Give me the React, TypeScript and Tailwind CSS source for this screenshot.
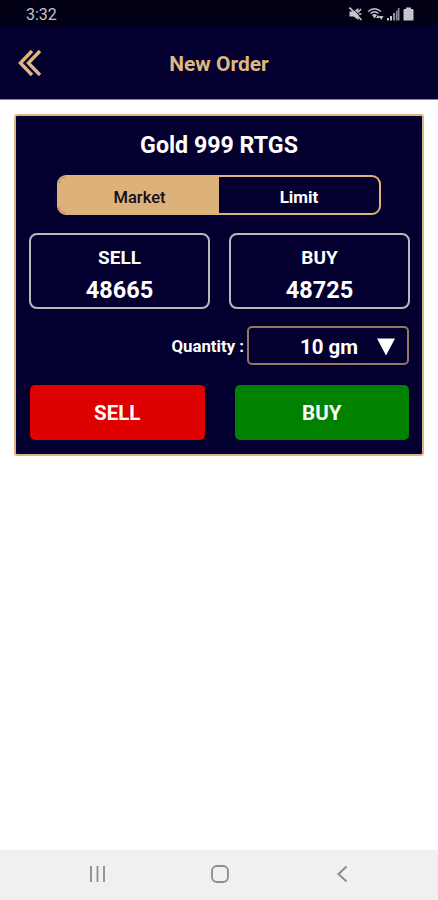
import React, { useState } from "react";

type PriceBoxProps = {
  label: string;
  price: number;
};

function StatusBar() {
  return (
    <div className="flex h-[26px] items-center justify-between bg-[#020014] pl-[26px] pr-[24px] text-[#c4c4ca]">
      <span className="pt-[3px] text-base leading-none">3:32</span>
      <div className="flex items-center pt-px">
        <svg width="14" height="14" viewBox="0 0 14 14" fill="currentColor">
          <path d="M.5 4.500H4L9.500 1v12L4.500 9.500h-4z" />
          <path d="M9.500 5l2.500-3M10 7h2.500" stroke="currentColor" strokeWidth="1.400" />
          <path d="M3 .5l9.500 10" stroke="#020014" strokeWidth="1" />
          <path d="M.5 .5l12 12.500" stroke="currentColor" strokeWidth="1.700" />
        </svg>
        <svg className="ml-[4px]" width="17" height="14" viewBox="0 0 17 14" fill="none" stroke="currentColor">
          <path d="M1 4.500Q7.500-1 14 4.500" strokeWidth="1.300" />
          <path d="M3.500 6.500Q7.500 3 11.500 6.500" strokeWidth="1.500" />
          <path d="M5 8q2.500-2 5 0l-2.500 3.500z" fill="currentColor" stroke="none" />
          <path d="M9 11l2-3 2 3zM12 9l2.200 4L16.500 9z" fill="currentColor" stroke="none" />
        </svg>
        <svg className="ml-[3px]" width="13" height="14" viewBox="0 0 13 14" fill="currentColor">
          <path d="M0 11h2v2.500H0zM3 9h2v4.500H3z" />
          <path d="M6 6h2.200v7.500H6zM9 3.500h1.500v10H9zM10.800 1h1.700v12.500h-1.700z" opacity=".7" />
        </svg>
        <svg className="ml-[3px]" width="11" height="14" viewBox="0 0 11 14" fill="currentColor">
          <path d="M3 .5h5V2h1.500q1 0 1 1v10q0 .5-.5.500H1q-.5 0-.5-.5V3q0-1 1-1H3z" />
        </svg>
      </div>
    </div>
  );
}

function Header() {
  return (
    <header className="grid h-[74px] grid-cols-[1fr_auto_1fr] items-center border-b border-[#8b8791] bg-[#030030] text-[#dfb780]">
      <button type="button" aria-label="Back" className="ml-[18px] w-6 pt-px">
        <svg width="24" height="28" viewBox="0 0 24 28" fill="none" stroke="currentColor" strokeWidth="3.300">
          <path d="M14 2L2.400 14 14 26M22 2L10.400 14 22 26" />
        </svg>
      </button>
      <h1 className="pt-[3px] text-[21px] font-bold leading-6">New Order</h1>
    </header>
  );
}

function PriceBox({ label, price }: PriceBoxProps) {
  return (
    <div className="flex h-[76px] flex-col items-center rounded-lg border-2 border-[#b9b9ba] pt-[11px]">
      <span className="text-[19px] font-bold leading-6">{label}</span>
      <span className="mt-1 text-[23.500px] font-bold leading-8">{price}</span>
    </div>
  );
}

function OrderCard() {
  const [orderType, setOrderType] = useState("Market");
  return (
    <section className="mx-[14px] mt-[14px] h-[342px] rounded-[3px] border-2 border-[#ddb580] bg-[#030030] px-[13px] text-white">
      <h2 className="pt-[13px] text-center text-[23.200px] font-bold leading-8">
        Gold 999 RTGS
      </h2>
      <div className="mx-auto mt-[14px] grid h-10 w-[324px] grid-cols-2 overflow-hidden rounded-[9px] border-2 border-[#ddb27a]">
        {["Market", "Limit"].map((type) => (
          <button
            key={type}
            type="button"
            onClick={() => setOrderType(type)}
            className={
              orderType === type
                ? "bg-[#ddb27a] pl-px pt-[6px] text-[16.500px] font-medium text-[#120d18]"
                : "pt-[5px] text-[17px] font-bold text-white"
            }
          >
            {type}
          </button>
        ))}
      </div>
      <div className="-mr-px mt-[18px] grid grid-cols-2 gap-[19px]">
        <PriceBox label="SELL" price={48665} />
        <PriceBox label="BUY" price={48725} />
      </div>
      <div className="mt-[17px] flex items-center justify-end gap-[3px]">
        <span className="pt-[3px] text-[16.800px] font-bold">Quantity :</span>
        <button
          type="button"
          className="flex h-[39px] w-[162px] items-center justify-end rounded-[5px] border-2 border-[#94775f] pr-[12px]"
        >
          <span className="pt-[3px] text-[20.500px] font-bold">10 gm</span>
          <svg className="ml-[19px] mt-[2px]" width="18" height="18" viewBox="0 0 18 18" fill="currentColor">
            <path d="M0 .5h18L9 17.500z" />
          </svg>
        </button>
      </div>
      <div className="ml-px mt-5 grid grid-cols-2 gap-[30px] text-[20.500px] font-bold">
        <button type="button" className="h-[55px] rounded-[5px] bg-[#df0000] pt-[2px]">
          SELL
        </button>
        <button type="button" className="h-[55px] rounded-[5px] bg-[#008200] pt-[2px]">
          BUY
        </button>
      </div>
    </section>
  );
}

function NavigationBar() {
  return (
    <nav className="mt-auto flex h-[50px] items-center bg-[#f0f0f0] pb-[2px] pl-[89px] text-[#8c8c8c]">
      <svg width="17" height="18" viewBox="0 0 17 18" stroke="currentColor" strokeWidth="1.800">
        <path d="M2 1v16M8.500 1v16M15 1v16" />
      </svg>
      <svg className="ml-[105px]" width="18" height="18" viewBox="0 0 18 18" fill="none" stroke="currentColor" strokeWidth="1.800">
        <rect x="1" y="1" width="16" height="16" rx="5" />
      </svg>
      <svg className="ml-[107px]" width="12" height="18" viewBox="0 0 12 18" fill="none" stroke="currentColor" strokeWidth="2">
        <path d="M10.500 1.500L2.500 9l8 7.500" />
      </svg>
    </nav>
  );
}

function App() {
  return (
    <div className="flex h-[900px] w-[438px] flex-col bg-white font-[Roboto,sans-serif]">
      <StatusBar />
      <Header />
      <OrderCard />
      <NavigationBar />
    </div>
  );
}

export default App;
